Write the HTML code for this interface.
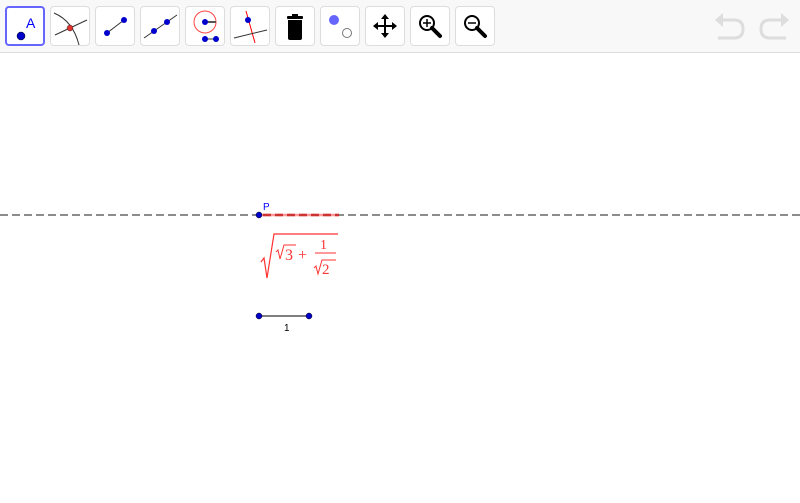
<!DOCTYPE html>
<html><head><meta charset="utf-8"><style>
body{margin:0;width:800px;height:503px;background:#fff;overflow:hidden;font-family:"Liberation Sans",sans-serif;position:relative}
.tb{position:absolute;left:0;top:0;width:800px;height:52px;background:#f8f8f8;border-bottom:1px solid #ddd}
.b{position:absolute;top:6px;width:38px;height:38px;background:#fff;border:1px solid #ddd;border-radius:4px}
.b svg{position:absolute;left:0;top:0}
.sel{border:2px solid #6666ff;width:36px;height:36px}
</style></head><body>
<div class="tb">
<div class="b sel" style="left:5px"><svg width="36" height="36"><circle cx="14" cy="28" r="4" fill="#0000cc" stroke="#000" stroke-width=".5"/><text x="19" y="20" font-size="14" fill="#0000ff" font-family="Liberation Sans">A</text></svg></div>
<div class="b" style="left:50px"><svg width="38" height="38"><path d="M3 6 Q22 14 28 38" stroke="#333" fill="none"/><path d="M4 28 L36 13" stroke="#333"/><circle cx="19" cy="21" r="3" fill="#e03030" stroke="#333" stroke-width=".5"/></svg></div>
<div class="b" style="left:95px"><svg width="38" height="38"><path d="M11 26 L28 13" stroke="#333"/><circle cx="11" cy="26" r="3" fill="#0000cc"/><circle cx="28" cy="13" r="3" fill="#0000cc"/></svg></div>
<div class="b" style="left:140px"><svg width="38" height="38"><path d="M3 31 L36 8" stroke="#333"/><circle cx="13" cy="24" r="3" fill="#0000cc"/><circle cx="26" cy="15" r="3" fill="#0000cc"/></svg></div>
<div class="b" style="left:185px"><svg width="38" height="38"><circle cx="19" cy="15" r="11" stroke="#f44" fill="none"/><path d="M19 15 L30 15" stroke="#555" stroke-width="2"/><circle cx="19" cy="15" r="3" fill="#0000cc"/><path d="M19 32 L30 32" stroke="#333"/><circle cx="19" cy="32" r="3" fill="#0000cc"/><circle cx="30" cy="32" r="3" fill="#0000cc"/></svg></div>
<div class="b" style="left:230px"><svg width="38" height="38"><path d="M15 4 L24 36" stroke="#f00"/><path d="M3 31 L36 23" stroke="#333"/><circle cx="17" cy="13" r="3" fill="#0000cc"/></svg></div>
<div class="b" style="left:275px"><svg width="38" height="38"><rect x="11" y="9" width="16" height="3" rx="1" fill="#000"/><rect x="16" y="7" width="6" height="3" fill="#000"/><path d="M12 13 H26 V31 Q26 33 24 33 H14 Q12 33 12 31 Z" fill="#000"/></svg></div>
<div class="b" style="left:320px"><svg width="38" height="38"><circle cx="13" cy="13" r="5" fill="#6666ff"/><circle cx="26" cy="26" r="4.5" fill="#fff" stroke="#777"/></svg></div>
<div class="b" style="left:365px"><svg width="38" height="38"><path d="M19 9 V29 M9 19 H29" stroke="#000" stroke-width="2"/><path d="M19 7 L15 12 H23Z M19 31 L15 26 H23Z M7 19 L12 15 V23Z M31 19 L26 15 V23Z" fill="#000"/></svg></div>
<div class="b" style="left:410px"><svg width="38" height="38"><circle cx="16" cy="16" r="7" stroke="#000" stroke-width="2" fill="none"/><path d="M12 16 H20 M16 12 V20" stroke="#000" stroke-width="1.5"/><path d="M21 21 L29 29" stroke="#000" stroke-width="4" stroke-linecap="round"/></svg></div>
<div class="b" style="left:455px"><svg width="38" height="38"><circle cx="16" cy="16" r="7" stroke="#000" stroke-width="2" fill="none"/><path d="M12 16 H20" stroke="#000" stroke-width="1.5"/><path d="M21 21 L29 29" stroke="#000" stroke-width="4" stroke-linecap="round"/></svg></div>
<svg style="position:absolute;left:712px;top:12px" width="80" height="30"><path d="M6 8 H22 Q31 8 31 17 Q31 26 22 26 H6" stroke="#ddd" stroke-width="3" fill="none"/><path d="M3 8 L11 1 V15Z" fill="#ddd"/><path d="M74 8 H58 Q49 8 49 17 Q49 26 58 26 H74" stroke="#ddd" stroke-width="3" fill="none"/><path d="M77 8 L69 1 V15Z" fill="#ddd"/></svg>
</div>
<svg style="position:absolute;left:0;top:0" width="800" height="503">
<line x1="0" y1="215" x2="800" y2="215" stroke="#666" stroke-width="1.5" stroke-dasharray="8,4"/>
<line x1="259" y1="215" x2="339" y2="215" stroke="#f99" stroke-width="2.5"/>
<line x1="263" y1="215" x2="339" y2="215" stroke="#c33" stroke-width="2.5" stroke-dasharray="8,4"/>
<circle cx="259" cy="215" r="3" fill="#0000cc" stroke="#000" stroke-width=".5"/>
<text x="263" y="210" font-size="10" fill="#0000ff">P</text>
<g fill="#f33" stroke="#f33" font-family="Liberation Serif">
<path d="M261 262 L264 258 L267 278 L274 234 H338" fill="none" stroke-width="1.2"/>
<path d="M276 252 L278 250 L280 259 L284 245 H296" fill="none" stroke-width="1"/>
<text x="285" y="260" font-size="16" stroke="none">3</text>
<text x="298" y="260" font-size="16" stroke="none">+</text>
<text x="320" y="249" font-size="14" stroke="none">1</text>
<line x1="315" y1="253" x2="336" y2="253" stroke-width="1"/>
<path d="M314 268 L316 266 L318 274 L322 260 H336" fill="none" stroke-width="1"/>
<text x="322" y="274" font-size="15" stroke="none">2</text>
</g>
<line x1="259" y1="316" x2="309" y2="316" stroke="#555" stroke-width="1.5"/>
<circle cx="259" cy="316" r="3" fill="#0000cc" stroke="#000" stroke-width=".5"/>
<circle cx="309" cy="316" r="3" fill="#0000cc" stroke="#000" stroke-width=".5"/>
<text x="284" y="331" font-size="10" fill="#000">1</text>
</svg>
</body></html>
